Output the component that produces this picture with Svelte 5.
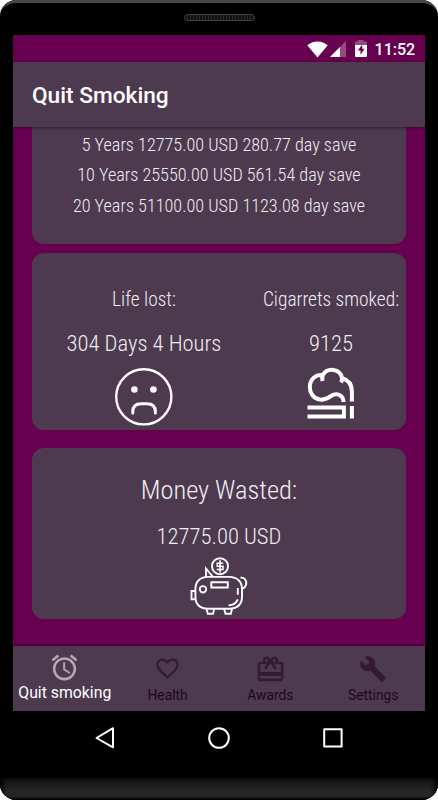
<script lang="ts">
  type Saving = { years: number; money: string; days: string };
  type Tab = { id: string; label: string };

  const savings: Saving[] = [
    { years: 5, money: '12775.00', days: '280.77' },
    { years: 10, money: '25550.00', days: '561.54' },
    { years: 20, money: '51100.00', days: '1123.08' },
  ];

  const tabs: Tab[] = [
    { id: 'quit', label: 'Quit smoking' },
    { id: 'health', label: 'Health' },
    { id: 'awards', label: 'Awards' },
    { id: 'settings', label: 'Settings' },
  ];

  let active = 'quit';
</script>

<div class="phone">
  <div class="top-bezel"><div class="speaker"></div></div>

  <div class="screen">
    <div class="status-bar">
      <svg class="wifi" width="21" height="17" viewBox="0 0 21 17"><path d="M.3 4.2C6-.9 15-.9 20.7 4.2L10.5 16.6z" fill="#fff" /></svg>
      <svg class="signal" width="16" height="16" viewBox="0 0 16 16">
        <path d="M0 16L16 0V16z" fill="#964a80" />
        <path d="M0 16L10 6V16z" fill="#fff" />
      </svg>
      <svg class="battery" width="12" height="17" viewBox="0 0 12 17">
        <path d="M0 5V2.5Q0 1.6 1 1.6H3.2V0H8.6V1.6H11Q12 1.6 12 2.5V5z" fill="#964a80" />
        <path d="M0 5H12V16Q12 17 11 17H1Q0 17 0 16z" fill="#fff" />
        <path d="M7.2 4.5L2.8 10.6H5.5V14.8L9.6 8.7H7.2z" fill="#680050" />
      </svg>
      <span class="clock">11:52</span>
    </div>

    <header class="app-bar">Quit Smoking</header>

    <main class="content">
      <section class="card savings">
        {#each savings as item}
          <p>{item.years} Years {item.money} USD {item.days} day save</p>
        {/each}
      </section>

      <section class="card stats">
        <div class="stat life">
          <h3>Life lost:</h3>
          <div class="value">304 Days 4 Hours</div>
          <svg width="60" height="60" viewBox="0 0 60 60" fill="none" stroke="#fff" stroke-width="2.4">
            <circle cx="29.8" cy="29.8" r="27.6" />
            <circle cx="20.4" cy="22.5" r="3.3" fill="#fff" stroke="none" />
            <circle cx="39.4" cy="22.5" r="3.3" fill="#fff" stroke="none" />
            <path d="M18.8 46V44.7Q18.8 36.7 27 36.7H33Q41.4 36.7 41.4 44.7V46" stroke-width="3" stroke-linecap="round" />
          </svg>
        </div>
        <div class="stat smoked">
          <h3>Cigarrets smoked:</h3>
          <div class="value">9125</div>
          <svg width="60" height="60" viewBox="0 0 60 60" fill="none" stroke="#fff" stroke-width="4">
            <path d="M42.5 35C42.5 28.5 36 24.8 30 29C25.5 32 22.5 33 19 32.6C12.5 31.8 8.8 26 8.8 20C8.8 12 15 7 21.7 8.2C26.5 .2 39 1.2 41.2 11.2C47.8 13 50.9 17.5 50.9 24.5V34.6" />
            <path d="M21.7 8.2Q20.8 10.5 21.6 14M41.2 10.5Q41.2 13.5 40 15.6M50.9 38.9V51.4" />
            <path d="M6.5 40.6H42.9V49.4H6.5" />
          </svg>
        </div>
      </section>

      <section class="card wasted">
        <h2>Money Wasted:</h2>
        <div class="value">12775.00 USD</div>
        <svg width="60" height="60" viewBox="0 0 60 60" fill="none" stroke="#fff" stroke-width="1.9">
          <circle cx="31" cy="9.2" r="8" />
          <path d="M34.2 6.2H28.2V9.2H34V12.5H27.7" stroke-width="1.5" />
          <path d="M31.1 3.2V15.5" stroke-width="1.6" />
          <path d="M17 20.5V11.5L23.5 19.3" />
          <path d="M19 19.9H40Q53 20.4 53 32.5V39.5Q53 51.5 40 51.7H19Q6.4 51.5 6.4 39.5V32.5Q6.4 20.4 19 19.9z" />
          <path d="M6 34H2.5V42.2H6M17.5 52L18.8 56.8H24L25.2 52M35.2 52L36.5 56.8H41.8L43 52" />
          <path d="M51.5 20.8C55 20 58.3 23.5 57 27.8Q56 31.2 52.8 31.8M48.8 31V37.8M48.8 42.3Q46.5 48 39.5 48.4" />
          <circle cx="14" cy="32.3" r="3.2" />
          <path d="M22.3 25.2H38.8V30.5H22.3z" />
        </svg>
      </section>
    </main>

    <nav class="tab-bar">
      {#each tabs as tab}
        <button class:active={active === tab.id} on:click={() => (active = tab.id)}>
          <svg class={tab.id} viewBox="0 0 24 24">
            {#if tab.id === 'quit'}
              <path d="M22 5.72l-4.6-3.86-1.29 1.53 4.6 3.86L22 5.72zM7.88 3.39L6.6 1.86 2 5.71l1.29 1.53 4.59-3.85zM12.5 8H11v6l4.75 2.85.75-1.23-4-2.37V8zM12 4c-4.97 0-9 4.03-9 9s4.02 9 9 9c4.97 0 9-4.03 9-9s-4.03-9-9-9zm0 16c-3.87 0-7-3.13-7-7s3.13-7 7-7 7 3.13 7 7-3.13 7-7 7z" />
            {:else if tab.id === 'health'}
              <path d="M16.5 3c-1.74 0-3.41.81-4.5 2.09C10.91 3.81 9.24 3 7.5 3 4.42 3 2 5.42 2 8.5c0 3.78 3.4 6.86 8.55 11.54L12 21.35l1.45-1.32C18.6 15.36 22 12.28 22 8.5 22 5.42 19.58 3 16.5 3zm-4.4 15.55l-.1.1-.1-.1C7.14 14.24 4 11.39 4 8.5 4 6.5 5.5 5 7.5 5c1.54 0 3.04.99 3.57 2.36h1.87C13.46 5.99 14.96 5 16.5 5c2 0 3.5 1.5 3.5 3.5 0 2.89-3.14 5.74-7.9 10.05z" />
            {:else if tab.id === 'awards'}
              <path d="M20 6h-2.18c.11-.31.18-.65.18-1 0-1.66-1.34-3-3-3-1.05 0-1.96.54-2.5 1.35l-.5.67-.5-.68C10.96 2.54 10.05 2 9 2 7.34 2 6 3.34 6 5c0 .35.07.69.18 1H4c-1.11 0-1.99.89-1.99 2L2 19c0 1.11.89 2 2 2h16c1.11 0 2-.89 2-2V8c0-1.11-.89-2-2-2zm-5-2c.55 0 1 .45 1 1s-.45 1-1 1-1-.45-1-1 .45-1 1-1zM9 4c.55 0 1 .45 1 1s-.45 1-1 1-1-.45-1-1 .45-1 1-1zm11 15H4v-2h16v2zm0-5H4V8h5.08L7 10.83 8.62 12 11 8.76l1-1.36 1 1.36L15.38 12 17 10.83 14.92 8H20v6z" />
            {:else}
              <path d="M22.7 19l-9.1-9.1c.9-2.3.4-5-1.5-6.9-2-2-5-2.4-7.4-1.3L9 6 6 9 1.6 4.7C.4 7.1.9 10.1 2.9 12.1c1.9 1.9 4.6 2.4 6.9 1.5l9.1 9.1c.4.4 1 .4 1.4 0l2.3-2.3c.5-.4.5-1.1.1-1.4z" />
            {/if}
          </svg>
          <span>{tab.label}</span>
        </button>
      {/each}
    </nav>
  </div>

  <div class="system-nav">
    <svg width="20" height="24" viewBox="0 0 20 24"><path d="M1.5 12L18 2.2V21.3z" /></svg>
    <svg width="24" height="24" viewBox="0 0 24 24"><circle cx="12" cy="12" r="9.8" /></svg>
    <svg width="20" height="20" viewBox="0 0 20 20"><path d="M1.2 1.2H18.6V18.6H1.2z" /></svg>
  </div>
  <div class="chin"></div>
</div>

<style>
  :global(body) {
    background: #fff;
  }

  .phone {
    box-sizing: border-box;
    width: 438px;
    height: 800px;
    display: flex;
    flex-direction: column;
    background: #000;
    border-radius: 16px;
    overflow: hidden;
    font-family: Roboto, sans-serif;
    color: #fff;
  }

  .top-bezel {
    box-sizing: border-box;
    height: 35px;
    border-top: 3px solid #484848;
    border-radius: 16px 16px 0 0;
    padding-top: 11px;
  }

  .speaker {
    box-sizing: border-box;
    width: 71px;
    height: 7px;
    margin: 0 auto;
    border: 1px solid #444;
    border-radius: 4px;
    background: repeating-linear-gradient(90deg, #111 0 2px, #2a2a2a 2px 3px);
  }

  .screen {
    display: flex;
    flex-direction: column;
    height: 676px;
    margin: 0 13.4px;
    background: #680050;
  }

  .status-bar {
    display: flex;
    align-items: center;
    justify-content: flex-end;
    height: 27px;
    flex: none;
    padding-right: 9px;
  }

  .wifi {
    margin-top: 1px;
  }

  .signal {
    margin-left: 2px;
  }

  .battery {
    margin-left: 9px;
  }

  .clock {
    width: 41px;
    margin: 2px 0 0 8px;
    font-size: 16px;
    font-weight: 500;
    white-space: nowrap;
  }

  .app-bar {
    height: 65px;
    flex: none;
    padding-left: 18.6px;
    background: #4d3a4f;
    box-shadow: 0 1px 3px rgba(0, 0, 0, 0.4);
    font-size: 22.7px;
    line-height: 67px;
    font-weight: 500;
    z-index: 1;
  }

  .content {
    flex: 1;
    min-height: 0;
    padding: 0 18.6px;
    overflow: hidden;
    color: #f0edf0;
    font-family: "Roboto Condensed", Roboto, sans-serif;
    font-stretch: 75%;
    font-weight: 300;
    text-align: center;
    white-space: nowrap;
  }

  .card {
    box-sizing: border-box;
    background: #4d3a4f;
    border-radius: 12px;
  }

  .savings {
    height: 117px;
    padding-top: 3px;
    border-radius: 0 0 12px 12px;
    font-size: 18.15px;
  }

  .savings p {
    margin: 0;
    line-height: 30.3px;
  }

  .stats {
    display: grid;
    grid-template-columns: 224px 150px;
    height: 177px;
    margin-top: 9px;
    padding-top: 33px;
  }

  .stat,
  .wasted {
    display: flex;
    flex-direction: column;
    align-items: center;
  }

  h3 {
    margin: 0;
    font-size: 19.4px;
    line-height: 28px;
    font-weight: 300;
  }

  .value {
    font-size: 22.6px;
    line-height: 28px;
  }

  .stat .value {
    margin: 16px 0 9px;
  }

  .wasted {
    height: 171px;
    margin-top: 18px;
    padding-top: 24px;
  }

  h2 {
    margin: 0;
    font-size: 26.4px;
    line-height: 36px;
    font-weight: 300;
  }

  .wasted .value {
    margin: 15px 0 6px;
  }

  svg {
    flex: none;
  }

  .tab-bar {
    display: grid;
    grid-template-columns: repeat(4, 1fr);
    height: 65px;
    flex: none;
    background: #4d3a4f;
    box-shadow: 0 -1px 2px rgba(0, 0, 0, 0.3);
  }

  .tab-bar button {
    display: flex;
    flex-direction: column;
    align-items: center;
    min-width: 0;
    padding: 9px 0 0;
    border: none;
    background: none;
    color: #22061f;
    font-family: Roboto, sans-serif;
    font-size: 13.8px;
    line-height: 18px;
    white-space: nowrap;
  }

  .tab-bar svg {
    width: 28px;
    height: 28px;
    fill: #351a33;
  }

  .tab-bar span {
    margin-top: 3px;
  }

  .tab-bar .health {
    width: 27px;
    height: 27px;
    margin-bottom: 1px;
  }

  .tab-bar .awards {
    width: 31px;
    height: 31px;
    margin: -1px 0 -2px;
  }

  .tab-bar button.active {
    padding-top: 6px;
    color: #fff;
    font-size: 15.8px;
  }

  .tab-bar .active svg {
    width: 31px;
    height: 31px;
    fill: #b3aab4;
    margin: 0;
  }

  .tab-bar .active span {
    margin-top: 1px;
  }

  .system-nav {
    display: flex;
    align-items: center;
    justify-content: space-between;
    height: 53px;
    padding: 0 95px;
    margin-bottom: 14px;
  }

  .system-nav svg {
    fill: none;
    stroke: #fff;
    stroke-width: 2;
    stroke-linejoin: round;
  }

  .chin {
    flex: 1;
    background: linear-gradient(#111, #272727 60%, #252525 85%, #000);
    box-shadow: inset 5px 0 5px -2px #000, inset -5px 0 5px -2px #000;
  }
</style>
